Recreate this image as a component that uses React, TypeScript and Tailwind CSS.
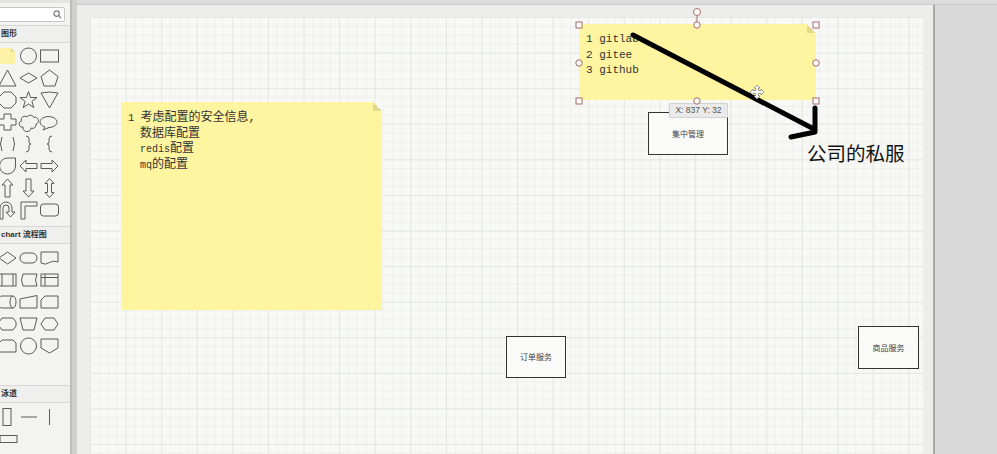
import React from "react";

const stroke = "#5a5a5a";

const basicShapes: React.ReactNode[] = [
  <>
    <path d="M3 3 H14 L18 7 V19 H3 Z" fill="#fcf1a4" stroke="none" />
    <path d="M14 3 L18 7 H14 Z" fill="#e4d98c" stroke="none" />
  </>,
  <circle cx="10.5" cy="11" r="8" />,
  <rect x="1.5" y="5" width="18" height="12" />,
  <path d="M10.5 3 L19 19 H2 Z" />,
  <path d="M10.5 6 L19 11 L10.5 16 L2 11 Z" />,
  <path d="M10.5 3 L19 9.5 L16 19 H5 L2 9.5 Z" />,
  <path d="M7 3 H14 L19 8 V14 L14 19 H7 L2 14 V8 Z" />,
  <path d="M10.5 2.5 L12.6 8.5 L19 8.6 L13.9 12.4 L15.8 18.6 L10.5 14.9 L5.2 18.6 L7.1 12.4 L2 8.6 L8.4 8.5 Z" />,
  <path d="M2 4 Q10.5 2 19 4 L10.5 19 Z" />,
  <path d="M7 3 H14 V8 H19 V14 H14 V19 H7 V14 H2 V8 H7 Z" />,
  <path d="M5 16 A3 3 0 0 1 3.5 10 A3.5 3.5 0 0 1 9 6 A4 4 0 0 1 16 6.5 A3 3 0 0 1 18 13 A3.5 3.5 0 0 1 13 17 A4 4 0 0 1 5 16 Z" />,
  <path d="M6 16 A8.5 5.5 0 1 1 10 16.5 L4 19 Z" />,
  <>
    <path d="M5 4 Q2 11 5 18" />
    <path d="M16 4 Q19 11 16 18" />
  </>,
  <path d="M8 3 Q11 3 11 6 V9 Q11 11 13 11 Q11 11 11 13 V16 Q11 19 8 19" />,
  <path d="M13 3 Q10 3 10 6 V9 Q10 11 8 11 Q10 11 10 13 V16 Q10 19 13 19" />,
  <path d="M10.5 3 H18.5 V11 A8 8 0 1 1 10.5 3 Z" />,
  <path d="M2 11 L8 5 V8.5 H19 V13.5 H8 V17 Z" />,
  <path d="M19 11 L13 5 V8.5 H2 V13.5 H13 V17 Z" />,
  <path d="M10.5 2 L16 8 H13 V20 H8 V8 H5 Z" />,
  <path d="M10.5 20 L16 14 H13 V2 H8 V14 H5 Z" />,
  <path d="M10.5 1.5 L15 6.5 H12.5 V15.5 H15 L10.5 20.5 L6 15.5 H8.5 V6.5 H6 Z" />,
  <path d="M3 20 V9 A6 6 0 0 1 15 9 V13 H18 L13.5 18 L9 13 H12 V9 A3 3 0 0 0 6 9 V20 Z" />,
  <path d="M3 20 V3 H19 V7 H7 V20 Z" />,
  <rect x="1.5" y="5" width="18" height="12" rx="3" />,
];

const flowShapes: React.ReactNode[] = [
  <path d="M10.5 5 L19 11 L10.5 17 L2 11 Z" />,
  <rect x="2" y="6" width="17" height="10" rx="5" />,
  <path d="M2 5 H19 V15 Q14.5 13 10.5 15.5 Q6.5 18.5 2 16 Z" />,
  <>
    <rect x="2" y="5" width="17" height="12" />
    <path d="M5 5 V17 M16 5 V17" />
  </>,
  <path d="M5 5 H19 Q16 11 19 17 H5 Q2 11 5 5 Z" />,
  <>
    <rect x="2" y="5" width="17" height="12" />
    <path d="M6 5 V17 M2 8.5 H19" />
  </>,
  <>
    <path d="M4.5 5 H16 A3 6 0 0 1 16 17 H4.5 A3 6 0 0 1 4.5 5 Z" />
    <path d="M16 5 A3 6 0 0 0 16 17" />
  </>,
  <path d="M2 8 L19 4.5 V17 H2 Z" />,
  <path d="M6 5 H19 V17 H2 V9 Z" />,
  <path d="M5 5 H16 L19 9 V13 L16 17 H5 L2 13 V9 Z" />,
  <path d="M2 5 H19 L16 17 H5 Z" />,
  <path d="M6 5 H15 L19 11 L15 17 H6 L2 11 Z" />,
  <path d="M5 5 H16 L19 8 V17 H2 V8 Z" />,
  <circle cx="10.5" cy="11" r="8" />,
  <path d="M2 4 H19 V13 L10.5 18 L2 13 Z" />,
];

function ShapeCell({ children }: { children: React.ReactNode }) {
  return (
    <div className="h-[22px] w-[21px] flex items-center justify-center">
      <svg width="21" height="22" viewBox="0 0 21 22" fill="none" stroke={stroke} strokeWidth="1">
        {children}
      </svg>
    </div>
  );
}

function SectionHeader({ children }: { children: React.ReactNode }) {
  return (
    <div className="h-[18px] flex items-center border-y border-[#d6d6d4] bg-[#efefed] overflow-hidden whitespace-nowrap">
      {children}
    </div>
  );
}

function Sidebar() {
  return (
    <div className="w-[70px] h-full shrink-0 bg-[#f3f3f1] overflow-hidden font-['Liberation_Sans','Noto_Sans_CJK_SC',sans-serif] text-[#333]">
      <div className="h-[3px] bg-[#e4e4e2]" />
      <div className="h-[22px] pt-[4px] pr-[5px]">
        <div className="h-[15px] -ml-[2px] bg-white border border-[#c6c6c6] rounded-[2px] flex items-center justify-end pr-[2px]">
          <svg width="9" height="9" viewBox="0 0 10 10" fill="none" stroke="#777" strokeWidth="1.3">
            <circle cx="4" cy="4" r="3" />
            <path d="M6.2 6.2 L9 9" />
          </svg>
        </div>
      </div>
      <SectionHeader>
        <span className="text-[8px] font-bold pl-[1px]">图形</span>
      </SectionHeader>
      <div className="pt-[2px] pb-[5px] -ml-[3px] grid grid-cols-[21px_21px_21px]">
        {basicShapes.map((s, i) => (
          <ShapeCell key={i}>{s}</ShapeCell>
        ))}
      </div>
      <SectionHeader>
        <span className="text-[8px] font-bold pl-[1px]">chart 流程图</span>
      </SectionHeader>
      <div className="h-[141px] pt-[3px] -ml-[3px] grid grid-cols-[21px_21px_21px] content-start">
        {flowShapes.map((s, i) => (
          <ShapeCell key={i}>{s}</ShapeCell>
        ))}
      </div>
      <SectionHeader>
        <span className="text-[8px] font-bold pl-[1px]">泳道</span>
      </SectionHeader>
      <div className="pt-[3px] -ml-[3px] grid grid-cols-[21px_21px_21px]">
        <ShapeCell>
          <rect x="6" y="2.5" width="8" height="17" />
        </ShapeCell>
        <ShapeCell>
          <path d="M3 11 H19" />
        </ShapeCell>
        <ShapeCell>
          <path d="M10.5 3 V19" />
        </ShapeCell>
        <ShapeCell>
          <rect x="3" y="7.5" width="17" height="7" />
        </ShapeCell>
      </div>
    </div>
  );
}

function ServiceBox({ label, className }: { label: string; className: string }) {
  return (
    <div
      className={
        "absolute border-[1.5px] border-[#333] bg-[#fafaf8] flex items-center justify-center text-[8px] text-[#444] font-['Noto_Sans_CJK_SC',sans-serif] " +
        className
      }
    >
      {label}
    </div>
  );
}

function Fold() {
  return <div className="absolute top-0 right-0 w-[9px] h-[9px] bg-[linear-gradient(225deg,#f8f9f6_50%,#e3d98c_50%)]" />;
}

const mono = "font-['Liberation_Mono','Noto_Sans_CJK_SC',monospace]";

function Canvas() {
  return (
    <div className="relative flex-1 h-full bg-[#d8d9d8] overflow-hidden">
      <div className="h-[5px] bg-[#dcdcdc] border-b border-[#c9c9c9]" />
      <div className="w-[858px] h-full bg-[#edeeeb] pl-[13px] pt-[12px] pr-[12px] border-r-2 border-[#a9a9a9]">
        <div className="relative w-[833px] h-[460px] bg-[#f8f9f6] bg-[linear-gradient(#e5e8e2_1px,transparent_1px),linear-gradient(90deg,#e5e8e2_1px,transparent_1px),linear-gradient(#eef0eb_1px,transparent_1px),linear-gradient(90deg,#eef0eb_1px,transparent_1px)] bg-size-[35.6px_35.6px,35.6px_35.6px,8.9px_8.9px,8.9px_8.9px]">
          <div className={"absolute left-[31px] top-[85px] w-[261px] h-[208px] bg-[#fff5a0] pl-[7px] pt-[9px] text-[12px] leading-[15.5px] text-[#333] " + mono}>
            <Fold />
            <div>
              <span className="text-[10.5px]">1 </span>考虑配置的安全信息,
            </div>
            <div className="pl-[12px]">数据库配置</div>
            <div className="pl-[12px]">
              <span className="text-[10px]">redis</span>配置
            </div>
            <div className="pl-[12px]">
              <span className="text-[10px]">mq</span>的配置
            </div>
          </div>

          <div className={"absolute left-[489px] top-[7px] w-[237px] h-[76px] bg-[#fff5a0] pl-[7px] pt-[8px] text-[11px] leading-[15.5px] text-[#333] " + mono}>
            <Fold />
            <div>1 gitlab</div>
            <div>2 gitee</div>
            <div>3 github</div>
          </div>

          <ServiceBox label="集中管理" className="left-[558px] top-[95px] w-[80px] h-[43px]" />
          <ServiceBox label="订单服务" className="left-[416px] top-[319px] w-[60px] h-[42px]" />
          <ServiceBox label="商品服务" className="left-[768px] top-[309px] w-[61px] h-[43px]" />

          <div className="absolute left-[579px] top-[86px] w-[59px] h-[15px] bg-[#eaeaea] border border-[#d2d2d2] rounded-[1px] flex items-center justify-center text-[8.5px] text-[#555] font-['Liberation_Sans',sans-serif]">
            X: 837 Y: 32
          </div>

          <div className="absolute left-[717px] top-[125px] text-[19.5px] leading-[22px] text-[#111] font-['Noto_Sans_CJK_SC',sans-serif]">
            公司的私服
          </div>
        </div>
      </div>
    </div>
  );
}

function Overlay() {
  const handle = "#a56b6b";
  const corners = [
    [579, 25],
    [816, 25],
    [579, 101],
    [816, 101],
  ];
  const mids = [
    [697, 25],
    [579, 63],
    [816, 63],
    [697, 101],
  ];
  return (
    <svg className="absolute inset-0 pointer-events-none" width="997" height="454" viewBox="0 0 997 454">
      <path d="M633 35 L812 128" stroke="#000" strokeWidth="5" strokeLinecap="round" />
      <path d="M815 108 L815 132 L791 137" fill="none" stroke="#000" strokeWidth="5" strokeLinecap="round" strokeLinejoin="round" />
      <g stroke="#888" strokeWidth="0.8" fill="#f4f4f0">
        <path d="M757 85 L760 88 H758.5 V90.5 H761 V89 L764 92 L761 95 V93.5 H758.5 V96 H760 L757 99 L754 96 H755.5 V93.5 H753 V95 L750 92 L753 89 V90.5 H755.5 V88 H754 Z" />
      </g>
      <path d="M697 16 V25" stroke={handle} strokeWidth="1" />
      <circle cx="697" cy="12" r="3.5" fill="#fff" stroke={handle} strokeWidth="1" />
      {corners.map(([x, y], i) => (
        <rect key={i} x={x - 3} y={y - 3} width="6" height="6" fill="#fff" stroke={handle} strokeWidth="1" />
      ))}
      {mids.map(([x, y], i) => (
        <circle key={i} cx={x} cy={y} r="3.2" fill="#fff" stroke={handle} strokeWidth="1" />
      ))}
    </svg>
  );
}

export default function App() {
  return (
    <div className="relative w-[997px] h-[454px] overflow-hidden flex bg-[#f3f3f1]">
      <Sidebar />
      <div className="w-[7px] h-full shrink-0 bg-[#d0d0d0] border-l-2 border-[#bdbdbd]" />
      <Canvas />
      <Overlay />
    </div>
  );
}
